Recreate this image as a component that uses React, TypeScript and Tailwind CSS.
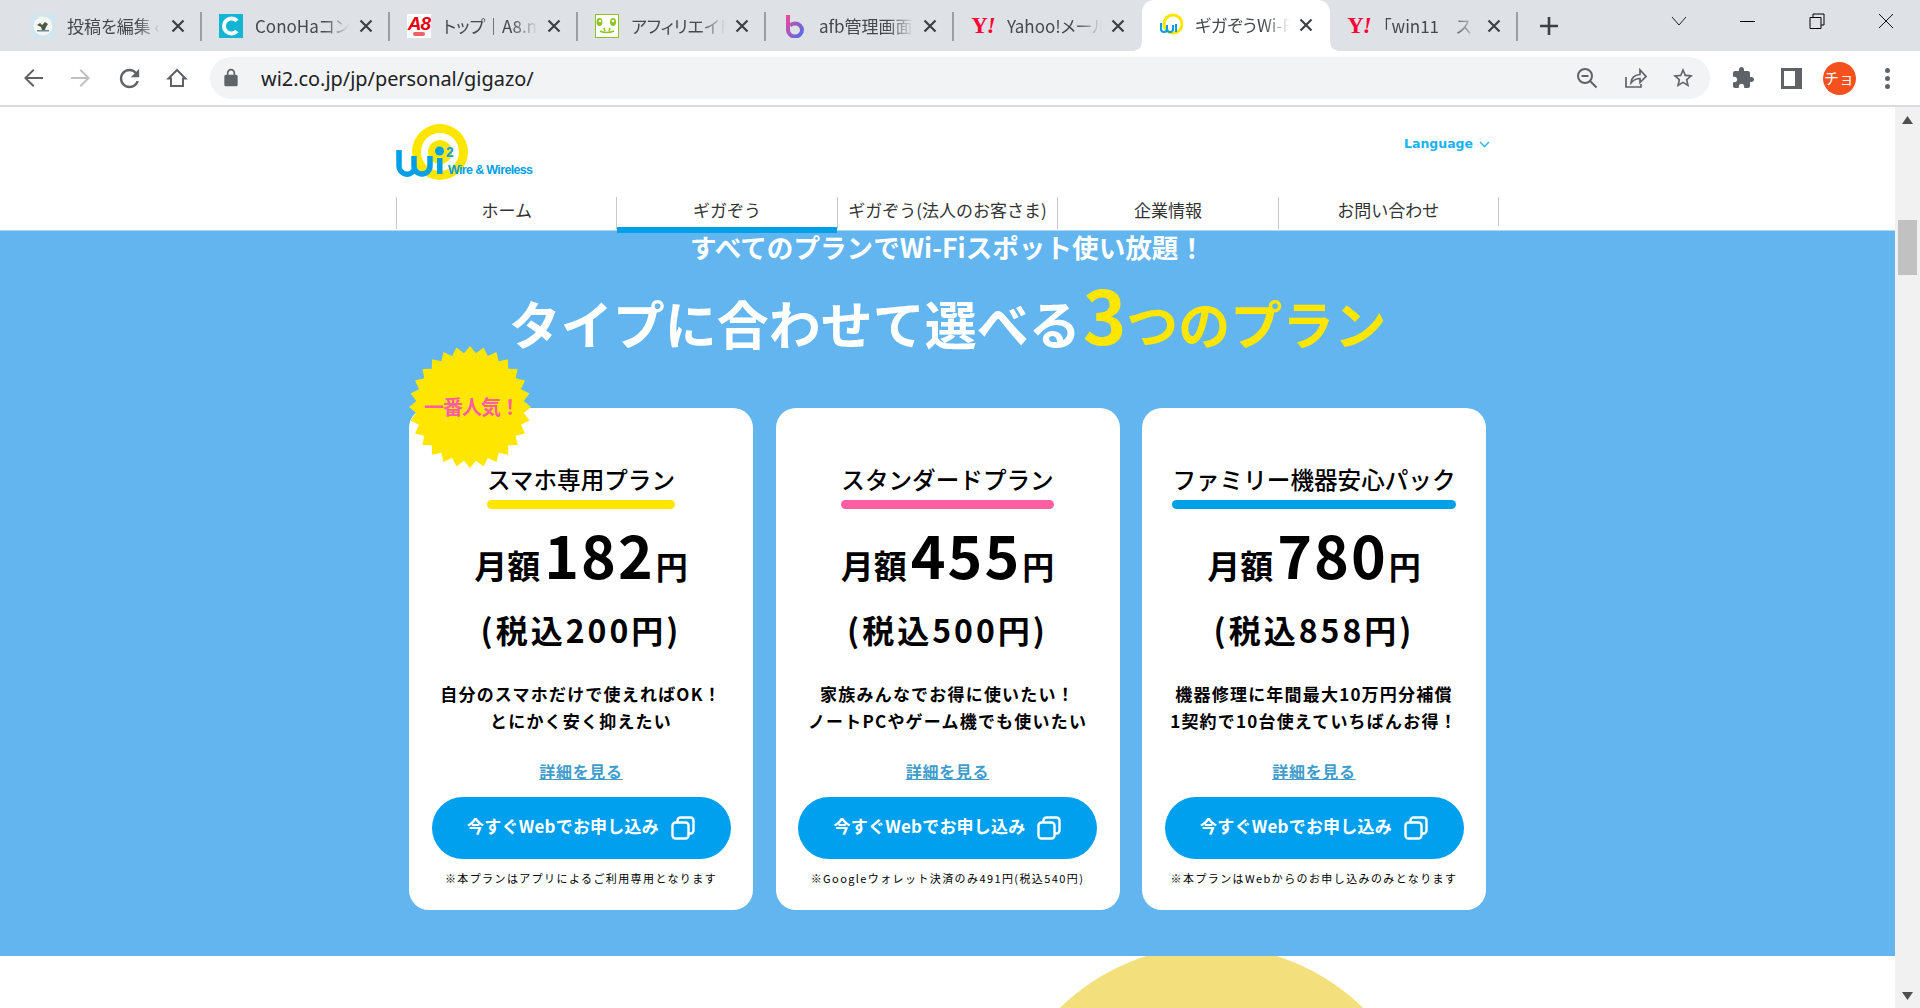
import React from 'react';

const jp = "font-['Noto_Sans_CJK_JP','Noto_Sans',sans-serif]";

// Small site icons shown in the browser tabs
function PostFavicon() {
  return (
    <svg width="24" height="24" viewBox="0 0 24 24">
      <rect width="24" height="24" fill="#cfe6ef" />
      <circle cx="12" cy="12" r="9.500" fill="#f4f6f4" />
      <path d="M6 11l3-2 2 2 3-3 3 2-2 3-1 3h-3l-1-3z" fill="#4d5b45" />
      <rect x="6" y="16" width="12" height="1.500" fill="#6f8a8f" />
    </svg>
  );
}

function ConohaFavicon() {
  return (
    <svg width="24" height="24" viewBox="0 0 24 24">
      <rect width="24" height="24" fill="#12b5d3" />
      <path d="M18 17a7.500 7.500 0 1 1 0-10" fill="none" stroke="#fff" strokeWidth="4" />
    </svg>
  );
}

function A8Favicon() {
  return (
    <div className="w-6 h-6 bg-white flex flex-col items-center overflow-hidden">
      <span className="font-['Liberation_Sans',sans-serif] font-bold italic text-[19px] leading-[19px] tracking-[-1px] text-[#e60012]">A8</span>
      <div className="w-3 h-[4px] mt-[-1px] rounded-full bg-[#f0606a]" />
    </div>
  );
}

function AffiliateFavicon() {
  return (
    <svg width="24" height="24" viewBox="0 0 24 24">
      <rect x="0.500" y="0.500" width="23" height="23" fill="#fff" stroke="#8fc31f" />
      <ellipse cx="4.500" cy="8" rx="3" ry="4" fill="#8fc31f" />
      <ellipse cx="18" cy="8" rx="3" ry="4" fill="#8fc31f" />
      <circle cx="5" cy="7" r="1.300" fill="#fff" />
      <circle cx="18" cy="7" r="1.300" fill="#fff" />
      <path d="M5 17c3 2 10 2 14 0M9 14l1 3M15 14l-1 3" fill="none" stroke="#8fc31f" strokeWidth="1.600" />
    </svg>
  );
}

function AfbFavicon() {
  return (
    <svg width="24" height="24" viewBox="0 0 24 24">
      <defs>
        <linearGradient id="afbGrad" x1="0" y1="0" x2="1" y2="1">
          <stop offset="0" stopColor="#ec4899" />
          <stop offset="1" stopColor="#4f6ee8" />
        </linearGradient>
      </defs>
      <path d="M5 1v15a7 6.500 0 1 0 7-6.500 7 6.500 0 0 0-5 2" fill="none" stroke="url(#afbGrad)" strokeWidth="4" />
    </svg>
  );
}

function YahooFavicon() {
  return (
    <span className="w-6 h-6 flex items-center justify-center font-['Liberation_Serif',serif] font-bold text-[23px] leading-none tracking-[-1px] text-[#ff0033]">
      Y<span className="italic">!</span>
    </span>
  );
}

function Wi2Favicon() {
  return (
    <svg width="24" height="24" viewBox="0 0 24 24">
      <circle cx="14" cy="11" r="9" fill="none" stroke="#ffe600" strokeWidth="3" />
      <path d="M2 10v6a3 3 0 0 0 6 0v-4m0 4a3 3 0 0 0 6 0v-4M17 11v8" fill="none" stroke="#00a0e9" strokeWidth="2" />
    </svg>
  );
}

const tabs = [
  { title: '投稿を編集 ‹', icon: <PostFavicon /> },
  { title: 'ConoHaコン', icon: <ConohaFavicon /> },
  { title: 'トップ｜A8.n', icon: <A8Favicon /> },
  { title: 'アフィリエイト', icon: <AffiliateFavicon /> },
  { title: 'afb管理画面', icon: <AfbFavicon /> },
  { title: 'Yahoo!メール', icon: <YahooFavicon />, noSep: true },
  { title: 'ギガぞうWi-F', icon: <Wi2Favicon />, active: true },
  { title: '「win11　ス', icon: <YahooFavicon /> },
];

function CloseIcon() {
  return (
    <svg width="14" height="14" viewBox="0 0 14 14" className="shrink-0">
      <path d="M1.500 1.500l11 11M12.500 1.500l-11 11" stroke="#3c4043" strokeWidth="2.200" />
    </svg>
  );
}

function TabStrip() {
  return (
    <div className="h-[51px] bg-[#dee1e6] flex pl-[14px]">
      {tabs.map((tab, i) => (
        <div
          key={i}
          className={
            tab.active
              ? 'relative w-[188px] h-[51px] bg-white rounded-t-[12px] flex items-center pl-[17px] pb-[2px]'
              : 'relative w-[188px] h-[51px] flex items-center pl-[17px]'
          }
        >
          {tab.icon}
          <span className={`ml-3 w-[95px] overflow-hidden whitespace-nowrap text-[17px] text-[#45484c] [font-feature-settings:'palt'] ${jp} [mask-image:linear-gradient(to_right,black_72%,transparent)]`}>
            {tab.title}
          </span>
          <span className="ml-[9px]">
            <CloseIcon />
          </span>
          {!tab.active && !tab.noSep && (
            <div className="absolute right-0 top-[12px] h-[29px] w-[2px] bg-[#9aa0a6]" />
          )}
          {tab.active && (
            <>
              <div className="absolute left-[-9px] bottom-0 w-[9px] h-[9px] bg-[radial-gradient(circle_at_0_0,transparent_8.500px,white_9px)]" />
              <div className="absolute right-[-9px] bottom-0 w-[9px] h-[9px] bg-[radial-gradient(circle_at_100%_0,transparent_8.500px,white_9px)]" />
            </>
          )}
        </div>
      ))}
      <div className="w-[62px] h-[51px] flex items-center justify-center">
        <svg width="18" height="18" viewBox="0 0 18 18">
          <path d="M9 0v18M0 9h18" stroke="#3c4043" strokeWidth="2.600" />
        </svg>
      </div>
      <div className="ml-auto flex h-[42px]">
        <div className="w-[69px] flex items-center justify-center">
          <svg width="16" height="10" viewBox="0 0 16 10"><path d="M1 1l7 8 7-8" fill="none" stroke="#222" /></svg>
        </div>
        <div className="w-[69px] flex items-center justify-center">
          <div className="w-[15px] h-[1px] bg-black" />
        </div>
        <div className="w-[69px] flex items-center justify-center">
          <svg width="16" height="16" viewBox="0 0 16 16"><path d="M4 4V1h11v11h-3M1 4.500h11v11H1z" fill="none" stroke="#000" /></svg>
        </div>
        <div className="w-[69px] flex items-center justify-center">
          <svg width="16" height="16" viewBox="0 0 16 16"><path d="M1 1l14 14M15 1L1 15" stroke="#111" /></svg>
        </div>
      </div>
    </div>
  );
}

function ToolIcon({ children }: { children: React.ReactNode }) {
  return <div className="w-[48px] h-[48px] flex items-center justify-center shrink-0">{children}</div>;
}

function Toolbar() {
  return (
    <div className="h-[54px] bg-white flex items-center pl-[9px] text-[#5f6368]">
      <ToolIcon>
        <svg width="24" height="24" viewBox="0 0 24 24" fill="#5f6368"><path d="M22 11H6.800l6.600-6.600L12 3l-9 9 9 9 1.400-1.400L6.800 13H22z" /></svg>
      </ToolIcon>
      <ToolIcon>
        <svg width="24" height="24" viewBox="0 0 24 24" fill="#bdc1c6"><path d="M2 11h15.200l-6.600-6.600L12 3l9 9-9 9-1.400-1.400 6.600-6.600H2z" /></svg>
      </ToolIcon>
      <ToolIcon>
        <svg width="29" height="29" viewBox="0 0 24 24" fill="#5f6368"><path d="M17.650 6.350C16.200 4.900 14.210 4 12 4c-4.420 0-7.990 3.580-7.990 8s3.570 8 7.990 8c3.730 0 6.840-2.550 7.730-6h-2.080c-.82 2.330-3.040 4-5.650 4-3.310 0-6-2.690-6-6s2.690-6 6-6c1.660 0 3.140.69 4.220 1.780L13 11h7V4l-2.350 2.350z" /></svg>
      </ToolIcon>
      <ToolIcon>
        <svg width="24" height="24" viewBox="0 0 24 24"><path d="M12 4L3.500 12.500H6V20h12v-7.500h2.500z" fill="none" stroke="#5f6368" strokeWidth="2" /></svg>
      </ToolIcon>
      <div className="ml-[9px] w-[1500px] h-[42px] rounded-full bg-[#f1f3f4] flex items-center">
        <svg width="20" height="20" viewBox="0 0 24 24" fill="#5f6368" className="ml-[11px] shrink-0">
          <path d="M18 8h-1V6c0-2.760-2.240-5-5-5S7 3.240 7 6v2H6c-1.100 0-2 .9-2 2v10c0 1.100.9 2 2 2h12c1.100 0 2-.9 2-2V10c0-1.100-.9-2-2-2zM9 6c0-1.660 1.340-3 3-3s3 1.340 3 3v2H9V6z" />
        </svg>
        <span className="ml-[20px] mt-[1px] text-[19.900px] text-[#202124] font-['Noto_Sans',sans-serif]">wi2.co.jp/jp/personal/gigazo/</span>
        <div className="ml-auto flex pr-[3px]">
          <ToolIcon>
            <svg width="24" height="24" viewBox="0 0 24 24" fill="none" stroke="#5f6368" strokeWidth="2">
              <circle cx="10" cy="10" r="7" />
              <path d="M6.500 10h7M15 15l6.500 6.500" />
            </svg>
          </ToolIcon>
          <ToolIcon>
            <svg width="24" height="24" viewBox="0 0 24 24" fill="none" stroke="#5f6368" strokeWidth="1.700">
              <path d="M3 11v10h15v-3" />
              <path d="M8 17c0-5 4-8.500 9-8.500V4l6 6.500-6 6V12.500c-4 0-6.500 1.500-9 4.500z" />
            </svg>
          </ToolIcon>
          <ToolIcon>
            <svg width="24" height="24" viewBox="0 0 24 24" fill="#5f6368"><path d="M22 9.240l-7.190-.62L12 2 9.190 8.630 2 9.240l5.460 4.730L5.820 21 12 17.270 18.180 21l-1.630-7.030L22 9.240zM12 15.400l-3.760 2.270 1-4.280-3.320-2.880 4.380-.38L12 6.100l1.710 4.040 4.380.38-3.320 2.880 1 4.280L12 15.400z" /></svg>
          </ToolIcon>
        </div>
      </div>
      <div className="ml-[9px] flex">
        <ToolIcon>
          <svg width="24" height="24" viewBox="0 0 24 24" fill="#5f6368"><path d="M20.500 11H19V7c0-1.100-.9-2-2-2h-4V3.500C13 2.120 11.880 1 10.500 1S8 2.120 8 3.500V5H4c-1.100 0-1.990.9-1.990 2v3.800H3.500c1.490 0 2.700 1.210 2.700 2.700s-1.210 2.700-2.700 2.700H2V20c0 1.100.9 2 2 2h3.800v-1.500c0-1.490 1.210-2.700 2.700-2.700 1.490 0 2.700 1.210 2.700 2.700V22H17c1.100 0 2-.9 2-2v-4h1.500c1.380 0 2.500-1.120 2.500-2.500S21.880 11 20.500 11z" /></svg>
        </ToolIcon>
        <ToolIcon>
          <div className="w-[21px] h-[21px] bg-[#5f6368] pl-[3px] py-[3px] pr-[7px]">
            <div className="w-full h-full bg-white" />
          </div>
        </ToolIcon>
        <ToolIcon>
          <div className={`w-[33px] h-[33px] rounded-full bg-[#f4511e] flex items-center justify-center text-white text-[15px] ${jp}`}>チョ</div>
        </ToolIcon>
        <ToolIcon>
          <div className="flex flex-col gap-[3px]">
            <div className="w-[5px] h-[5px] rounded-full bg-[#5f6368]" />
            <div className="w-[5px] h-[5px] rounded-full bg-[#5f6368]" />
            <div className="w-[5px] h-[5px] rounded-full bg-[#5f6368]" />
          </div>
        </ToolIcon>
      </div>
    </div>
  );
}

function Logo() {
  return (
    <svg width="140" height="58" viewBox="0 0 140 58">
      <circle cx="44" cy="28" r="28" fill="#ffe600" />
      <circle cx="44" cy="28" r="19" fill="#fff" />
      <circle cx="44" cy="28" r="12" fill="#ffe600" />
      <path
        d="M3 26v16a8 8 0 0 0 15 4M18 32v10a8 8 0 0 0 16 0V32"
        fill="none"
        stroke="#00a0e9"
        strokeWidth="5.500"
      />
      <circle cx="43.500" cy="27" r="4.500" fill="#00a0e9" />
      <rect x="41" y="34" width="5.500" height="16" fill="#00a0e9" />
      <text x="50" y="33" fontSize="14" fontWeight="700" fill="#00a0e9" fontFamily="Liberation Sans, sans-serif">2</text>
      <text x="52" y="50" fontSize="12.500" fontWeight="700" fill="#00a0e9" fontFamily="Liberation Sans, sans-serif" textLength="85">Wire &amp; Wireless</text>
    </svg>
  );
}

const navItems = ['ホーム', 'ギガぞう', 'ギガぞう(法人のお客さま)', '企業情報', 'お問い合わせ'];

function SiteHeader() {
  return (
    <header className="relative z-10 h-[124px] bg-white border-b border-[#a6dcf5] flex flex-col items-center">
      <div className="w-[1103px] h-[90px] pt-[17px] flex justify-between">
        <Logo />
        <div className="flex items-center h-[40px] pr-[9px] gap-[6px] text-[#19b2f5]">
          <span className="font-['DejaVu_Sans',sans-serif] font-bold text-[12.500px]">Language</span>
          <svg width="11" height="7" viewBox="0 0 11 7"><path d="M1 1l4.500 4.500L10 1" fill="none" stroke="#19b2f5" strokeWidth="1.300" /></svg>
        </div>
      </div>
      <nav className="w-[1103px] grid grid-cols-5 border-r border-[#c9c9c9] h-[29px]">
        {navItems.map((item, i) => (
          <div key={item} className={`relative border-l border-[#c9c9c9] flex items-center justify-center pb-[6px] whitespace-nowrap text-[17px] text-[#333] ${jp}`}>
            {item}
            {i === 1 && <div className="absolute left-0 right-0 top-[30px] h-[6px] bg-[#00a0e9]" />}
          </div>
        ))}
      </nav>
    </header>
  );
}

const starPoints = Array.from({ length: 56 }, (_, i) => {
  const r = i % 2 === 0 ? 61 : 54;
  const a = (i * Math.PI) / 28;
  return `${(61 + r * Math.sin(a)).toFixed(1)},${(61 - r * Math.cos(a)).toFixed(1)}`;
}).join(' ');

function PopularBadge() {
  return (
    <div className="absolute left-0 top-[-62px] w-[122px] h-[122px] flex items-center justify-center">
      <svg width="122" height="122" viewBox="0 0 122 122" className="absolute inset-0">
        <polygon points={starPoints} fill="#ffe600" />
      </svg>
      <span className="relative font-bold text-[20px] tracking-[-1px] ml-[3px] text-[#ff5fa2]">一番人気！</span>
    </div>
  );
}

function CopyIcon() {
  return (
    <svg width="24" height="24" viewBox="0 0 24 24" fill="none" stroke="#fff" strokeWidth="2.400">
      <rect x="6.500" y="1.500" width="16" height="16" rx="3" />
      <rect x="1.500" y="6.500" width="16" height="16" rx="3" fill="#00a0ef" />
    </svg>
  );
}

const plans = [
  {
    name: 'スマホ専用プラン',
    bar: 'bg-[#ffe600]',
    price: '182',
    tax: '200',
    lines: ['自分のスマホだけで使えればOK！', 'とにかく安く抑えたい'],
    note: '※本プランはアプリによるご利用専用となります',
    popular: true,
  },
  {
    name: 'スタンダードプラン',
    bar: 'bg-[#ff5fa2]',
    price: '455',
    tax: '500',
    lines: ['家族みんなでお得に使いたい！', 'ノートPCやゲーム機でも使いたい'],
    note: '※Googleウォレット決済のみ491円(税込540円)',
  },
  {
    name: 'ファミリー機器安心パック',
    bar: 'bg-[#00a0e9]',
    price: '780',
    tax: '858',
    lines: ['機器修理に年間最大10万円分補償', '1契約で10台使えていちばんお得！'],
    note: '※本プランはWebからのお申し込みのみとなります',
  },
];

function PlanCard({ plan }: { plan: (typeof plans)[number] }) {
  return (
    <div className="relative w-[344px] h-[502px] bg-white rounded-[20px] flex flex-col items-center text-black">
      {plan.popular && <PopularBadge />}
      <div className="mt-[53px] flex flex-col items-stretch">
        <div className="text-[23.600px] leading-[36px] font-medium whitespace-nowrap">{plan.name}</div>
        <div className={`h-[9px] mt-[3px] rounded-full ${plan.bar}`} />
      </div>
      <div className="mt-[9px] h-[72px] flex items-baseline justify-center font-bold">
        <span className="text-[33px]">月額</span>
        <span className="text-[59px] leading-[72px] tracking-[2px] ml-[4px] mr-[1px]">{plan.price}</span>
        <span className="text-[32px]">円</span>
      </div>
      <div className="mt-[16px] text-[32px] leading-[46px] font-bold tracking-[3px] whitespace-nowrap">({'税込'}{plan.tax}{'円'})</div>
      <div className="mt-[28px] text-center text-[17px] leading-[27px] font-bold tracking-[1.200px]">
        {plan.lines.map((l) => (
          <div key={l} className="whitespace-nowrap">{l}</div>
        ))}
      </div>
      <a className="mt-[25px] text-[16px] leading-[24px] font-bold tracking-[0.700px] text-[#3f9ccb] underline">詳細を見る</a>
      <button className="mt-[14px] w-[299px] h-[62px] rounded-full bg-[#00a0ef] flex items-center justify-center gap-[12px] text-white text-[17px] font-bold tracking-[0.200px]">
        <span className="mt-[-4px]">今すぐWebでお申し込み</span>
        <CopyIcon />
      </button>
      <div className="mt-[11px] text-[11px] leading-[16px] tracking-[1.400px] whitespace-nowrap">{plan.note}</div>
    </div>
  );
}

function PlansSection() {
  return (
    <section className="h-[725px] bg-[#62b5ee] flex flex-col items-center pt-[1px]">
      <h2 className="text-[26.600px] leading-[30px] font-bold text-white">すべてのプランでWi-Fiスポット使い放題！</h2>
      <h1 className="mt-[12px] h-[78px] flex items-baseline text-[52px] leading-[78px] font-bold text-white whitespace-nowrap">
        タイプに合わせて選べる
        <span className="ml-[2px] text-[#ffe600]">
          <span className="text-[74px]">3</span>つのプラン
        </span>
      </h1>
      <div className="mt-[56px] flex gap-[22.500px]">
        {plans.map((p) => (
          <PlanCard key={p.name} plan={p} />
        ))}
      </div>
    </section>
  );
}

function Scrollbar() {
  return (
    <div className="w-[25px] bg-[#f1f1f1] flex flex-col items-center shrink-0">
      <div className="h-[25px] flex items-center justify-center">
        <svg width="11" height="8" viewBox="0 0 11 8"><path d="M5.500 0L11 8H0z" fill="#505050" /></svg>
      </div>
      <div className="mt-[88px] w-[19px] h-[55px] bg-[#c1c1c1]" />
      <div className="flex-1" />
      <div className="h-[25px] flex items-center justify-center">
        <svg width="11" height="8" viewBox="0 0 11 8"><path d="M5.500 8L11 0H0z" fill="#505050" /></svg>
      </div>
    </div>
  );
}

export default function App() {
  return (
    <div className={`w-[1920px] h-[1008px] overflow-hidden flex flex-col bg-white ${jp}`}>
      <TabStrip />
      <Toolbar />
      <div className="h-[2px] bg-[#dadce0]" />
      <div className="flex-1 flex min-h-0">
        <main className="flex-1 flex flex-col overflow-hidden">
          <SiteHeader />
          <PlansSection />
          {/* next section: only the top of the yellow circle is in view */}
          <div className="flex-1 overflow-hidden bg-white">
            <div className="ml-[995px] mt-[-10px] w-[433px] h-[433px] rounded-full bg-[#f3df7b]" />
          </div>
        </main>
        <Scrollbar />
      </div>
    </div>
  );
}
